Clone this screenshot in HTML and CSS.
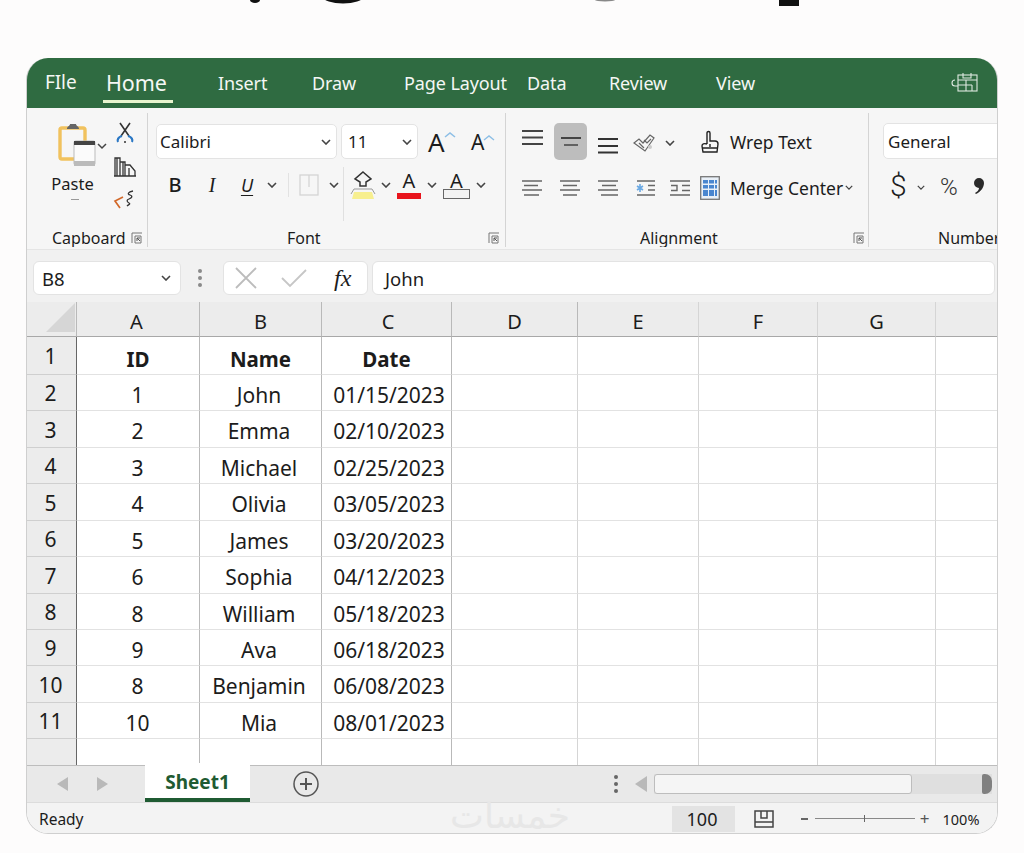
FILE: index.html
```html
<!DOCTYPE html>
<html lang="en">
<head>
<meta charset="utf-8">
<title>Sheet1 - Excel</title>
<link rel="stylesheet" href="styles.css">
</head>
<body>
<svg class="defs" width="0" height="0" aria-hidden="true">
  <symbol id="caret" viewBox="0 0 10 6"><path d="M1 1l4 4 4-4" fill="none" stroke="#444" stroke-width="1.6"/></symbol>
  <symbol id="launch" viewBox="0 0 12 12"><path d="M11 1H1v10M4 4h6v7H4z" fill="none" stroke="#777" stroke-width="1"/><path d="M6 9V6h3M6 6l3 3" fill="none" stroke="#555" stroke-width="1"/></symbol>
</svg>
<div class="page-top">
  <svg class="cut-heading" width="1024" height="7" viewBox="0 0 1024 7">
    <ellipse cx="255" cy="0" rx="5" ry="3" fill="#111"/>
    <ellipse cx="343" cy="-3" rx="20" ry="6.500" fill="#111"/>
    <ellipse cx="605" cy="0" rx="10" ry="1.500" fill="#888"/>
    <rect x="779" y="0" width="20" height="6" fill="#111"/>
  </svg>
</div>
<main class="window">
  <header class="titlebar">
    <nav class="tabs">
      <span class="tab t-file">FIle</span>
      <span class="tab t-home">Home</span>
      <span class="tab t-insert">Insert</span>
      <span class="tab t-draw">Draw</span>
      <span class="tab t-layout">Page Layout</span>
      <span class="tab t-data">Data</span>
      <span class="tab t-review">Review</span>
      <span class="tab t-view">View</span>
    </nav>
    <svg class="share" width="32" height="22" viewBox="0 0 32 22" fill="none" stroke="#dfe9e1" stroke-width="1.1">
      <path d="M7 8a3 3 0 1 0 0 6h3"/>
      <rect x="10" y="3" width="19" height="16"/>
      <path d="M15 1v5h8V1M10 8h19M10 13h14M18 8v11M24 13v6"/>
    </svg>
  </header>

  <section class="ribbon">
    <div class="group g-clip">
      <div class="group-body clip-body">
        <div class="paste">
          <svg width="60" height="50" viewBox="0 0 60 50">
            <rect x="12" y="8" width="25" height="31" rx="2" fill="none" stroke="#f1c25e" stroke-width="3.4"/>
            <path d="M19 9c0-3 3-3 3-5h6c0 2 3 2 3 5z" fill="#666"/>
            <rect x="26" y="21" width="21" height="24" rx="1.5" fill="#fbfbfb" stroke="#bbb"/>
            <rect x="26" y="21" width="21" height="4" fill="#444"/>
            <rect x="26" y="41" width="21" height="5" fill="#bbb"/>
            <path d="M50 24l4 4 4-4" fill="none" stroke="#444" stroke-width="1.5"/>
          </svg>
          <span class="paste-label">Paste</span>
          <span class="paste-dash"></span>
        </div>
        <div class="clip-tools">
          <svg width="22" height="24" viewBox="0 0 22 24" fill="none" stroke-width="1.6">
            <path d="M6 2l9 13M16 2L7 15" stroke="#333"/>
            <path d="M8 15c-4 1-5 4-4 6M14 15c4 1 5 4 4 6" stroke="#2b78c5" stroke-width="2.200"/>
            <path d="M10 21h2" stroke="#333"/>
          </svg>
          <svg width="24" height="22" viewBox="0 0 24 22" fill="none" stroke="#333" stroke-width="1.3">
            <path d="M2 20V2h5v18M7 20V6h5v14M12 20V9h5l5 6v5zM1 20h22M4 2v18M10 6v14M16 12v8"/>
          </svg>
          <svg width="24" height="22" viewBox="0 0 24 22" fill="none" stroke-width="1.7">
            <path d="M10 8L2 12l5 7" stroke="#d2692a"/>
            <path d="M20 2c-5 1-6 3-3 4s2 3-1 4 -2 3 0 4-1 2-2 3" stroke="#333" stroke-width="1.3"/>
          </svg>
        </div>
      </div>
      <div class="group-label"><span>Capboard</span><svg class="launch"><use href="#launch"/></svg></div>
    </div>

    <div class="group g-font">
      <div class="group-body">
        <div class="font-row1">
          <div class="select sel-font"><span>Calibri</span><svg class="caret"><use href="#caret"/></svg></div>
          <div class="select sel-size"><span>11</span><svg class="caret"><use href="#caret"/></svg></div>
          <span class="grow grow-up">A<svg width="12" height="7" viewBox="0 0 12 7"><path d="M1 6l5-4 5 4" fill="none" stroke="#8dbfe6" stroke-width="1.6"/></svg></span>
          <span class="grow grow-down">A<svg width="12" height="7" viewBox="0 0 12 7"><path d="M1 6l5-4 5 4" fill="none" stroke="#8dbfe6" stroke-width="1.4"/></svg></span>
        </div>
        <div class="font-row2">
          <b class="fmt fmt-b">B</b>
          <i class="fmt fmt-i">I</i>
          <span class="fmt fmt-u">U</span>
          <svg class="caret"><use href="#caret"/></svg>
          <span class="vsep"></span>
          <svg width="20" height="22" viewBox="0 0 20 22" fill="none" stroke="#d4d4d4" stroke-width="1.3"><rect x="1" y="1" width="18" height="20"/><path d="M10 1v12"/></svg>
          <svg class="caret"><use href="#caret"/></svg>
          <span class="vsep tall"></span>
          <svg width="30" height="30" viewBox="0 0 30 30" fill="none">
            <path d="M3 24l3-5h18l3 5" stroke="#999" stroke-width="1"/>
            <path d="M6 22h18l2 7H4z" fill="#f7ef8f"/>
            <path d="M15 2l8 7-5 3v4h-6v-4L7 9z" stroke="#333" stroke-width="1.5" fill="#f5f5f5"/>
          </svg>
          <svg class="caret"><use href="#caret"/></svg>
          <span class="letter letter-red">A</span>
          <svg class="caret"><use href="#caret"/></svg>
          <span class="letter letter-box">A</span>
          <svg class="caret"><use href="#caret"/></svg>
        </div>
      </div>
      <div class="group-label"><span>Font</span><svg class="launch"><use href="#launch"/></svg></div>
    </div>

    <div class="group g-align">
      <div class="group-body">
        <div class="align-row">
          <svg class="al-top" width="21" height="37" viewBox="0 0 21 37" stroke="#444" stroke-width="1.8"><path d="M0 8h21M0 14.500h21M0 21h21"/></svg>
          <span class="al-selected"><svg width="20" height="12" viewBox="0 0 20 12" stroke="#444" stroke-width="2"><path d="M0 2h20"/><path d="M3 9h14" stroke-width="1.5"/></svg></span>
          <svg class="al-bottom" width="20" height="37" viewBox="0 0 20 37" stroke="#333" stroke-width="1.8"><path d="M0 16h20M0 23h20M0 29.500h20"/></svg>
          <svg class="al-orient" width="22" height="20" viewBox="0 0 22 20" fill="none" stroke="#666" stroke-width="1.2"><path d="M1 10l5-4 4 4 7-8 4 3-9 13z"/><path d="M6 10l5 5M11 7l3 3 4-4"/><circle cx="17" cy="14" r="2" fill="#ccc" stroke="none"/></svg>
          <svg class="caret al-caret"><use href="#caret"/></svg>
          <svg class="al-wrap" width="20" height="24" viewBox="0 0 20 24" fill="none" stroke="#222" stroke-width="1.4"><path d="M7 14V3c0-2 3-2 3 0v8h5c2 0 3 1 3 3l-1 8H3l-1-6c0-2 2-3 5-2M2 18h15M10 14v3"/></svg>
          <span class="al-text">Wrep Text</span>
        </div>
        <div class="align-row row-two">
          <svg class="li" width="20" height="16" viewBox="0 0 20 16" stroke="#666" stroke-width="1.6"><path d="M0 1h20M2 5.500h14M0 10h20M2 15h15"/></svg>
          <svg class="li li2" width="20" height="16" viewBox="0 0 20 16" stroke="#666" stroke-width="1.6"><path d="M0 1h20M3 5.500h14M0 10h20M3 15h14"/></svg>
          <svg class="li li2" width="20" height="16" viewBox="0 0 20 16" stroke="#666" stroke-width="1.6"><path d="M0 1h20M4 5.500h14M0 10h20M3 15h17"/></svg>
          <svg class="li li3" width="20" height="16" viewBox="0 0 20 16" stroke="#666" stroke-width="1.6"><path d="M2 1h18M13 5.500h7M13 10h7M2 15h18"/><path d="M5 4v8M2 6l6 4M8 6l-6 4" stroke="#6aa9e4"/></svg>
          <svg class="li li4" width="20" height="16" viewBox="0 0 20 16" fill="none" stroke="#666" stroke-width="1.400"><path d="M0 1h20M1 5.500h6v5H1M12 5.500h8M12 10.500h8M0 15h20"/></svg>
          <svg class="li li5" width="20" height="24" viewBox="0 0 20 24"><rect x=".7" y=".7" width="18.600" height="22.600" fill="#e9f0f8" stroke="#777" stroke-width="1.300"/><path d="M3 4h5v3.500H3zM9 4h5v3.500H9zM15 4h2v3.500h-2zM3 9h5v3.500H3zM9 9h5v3.500H9zM15 9h2v3.500h-2zM3 14h5v6H3zM9 14h5v6H9zM15 14h2v6h-2z" fill="#4a86cf"/></svg>
          <span class="al-text">Merge Center</span>
          <svg class="caret small-caret"><use href="#caret"/></svg>
        </div>
      </div>
      <div class="group-label"><span>Alignment</span><svg class="launch"><use href="#launch"/></svg></div>
    </div>

    <div class="group g-number">
      <div class="group-body">
        <div class="select sel-num"><span>General</span></div>
        <div class="num-row">
          <span class="num-dollar">$</span>
          <svg class="caret"><use href="#caret"/></svg>
          <span class="num-pct">%</span>
          <svg class="num-comma" width="10" height="16" viewBox="0 0 10 16"><path d="M5 0a5 5 0 0 1 5 5c0 5-4 9-8 11l-1-1c2-1 4-3 4-5a5 5 0 0 1 0-10z" fill="#2a2a2a"/></svg>
        </div>
      </div>
      <div class="group-label"><span>Number</span></div>
    </div>
  </section>

  <section class="formula">
    <div class="fbox name-box"><span>B8</span><svg class="caret"><use href="#caret"/></svg></div>
    <div class="dots"><i></i><i></i><i></i></div>
    <div class="fbox fx-box">
      <svg width="24" height="24" viewBox="0 0 24 24" stroke="#bcbcbc" stroke-width="1.800"><path d="M2 2l20 20M22 2L2 22"/></svg>
      <svg class="fx-check" width="28" height="20" viewBox="0 0 28 20" fill="none" stroke="#c6c6c6" stroke-width="1.800"><path d="M2 10l8 8L26 2"/></svg>
      <span class="fx">fx</span>
    </div>
    <div class="fbox input-box">John</div>
  </section>

  <table class="sheet">
    <colgroup>
      <col class="c-head"><col class="c-a"><col class="c-b"><col class="c-c"><col class="c-d"><col class="c-e"><col class="c-f"><col class="c-g"><col class="c-h">
    </colgroup>
    <thead>
      <tr class="h35"><th class="corner"><svg width="30" height="30" viewBox="0 0 30 30"><path d="M29 0v29H0z" fill="#d6d6d6"/></svg></th><th class="col-a">A</th><th>B</th><th class="col-c">C</th><th>D</th><th>E</th><th>F</th><th>G</th><th></th></tr>
    </thead>
    <tbody>
      <tr class="h38 bold"><th>1</th><td>ID</td><td>Name</td><td>Date</td><td></td><td></td><td></td><td></td><td></td></tr>
      <tr class="h36"><th>2</th><td>1</td><td>John</td><td>01/15/2023</td><td></td><td></td><td></td><td></td><td></td></tr>
      <tr class="h37"><th>3</th><td>2</td><td>Emma</td><td>02/10/2023</td><td></td><td></td><td></td><td></td><td></td></tr>
      <tr class="h36"><th>4</th><td>3</td><td>Michael</td><td>02/25/2023</td><td></td><td></td><td></td><td></td><td></td></tr>
      <tr class="h37"><th>5</th><td>4</td><td>Olivia</td><td>03/05/2023</td><td></td><td></td><td></td><td></td><td></td></tr>
      <tr class="h36"><th>6</th><td>5</td><td>James</td><td>03/20/2023</td><td></td><td></td><td></td><td></td><td></td></tr>
      <tr class="h37"><th>7</th><td>6</td><td>Sophia</td><td>04/12/2023</td><td></td><td></td><td></td><td></td><td></td></tr>
      <tr class="h36"><th>8</th><td>8</td><td>William</td><td>05/18/2023</td><td></td><td></td><td></td><td></td><td></td></tr>
      <tr class="h36"><th>9</th><td>9</td><td>Ava</td><td>06/18/2023</td><td></td><td></td><td></td><td></td><td></td></tr>
      <tr class="h37"><th>10</th><td>8</td><td>Benjamin</td><td>06/08/2023</td><td></td><td></td><td></td><td></td><td></td></tr>
      <tr class="h36"><th>11</th><td>10</td><td>Mia</td><td>08/01/2023</td><td></td><td></td><td></td><td></td><td></td></tr>
      <tr class="h26 last"><th></th><td></td><td></td><td></td><td></td><td></td><td></td><td></td><td></td></tr>
    </tbody>
  </table>

  <section class="tabbar">
    <span class="tri tri-left tri-nav"></span>
    <span class="tri tri-right"></span>
    <span class="sheet-tab">Sheet1</span>
    <svg class="add-sheet" width="26" height="26" viewBox="0 0 26 26" fill="none" stroke="#555"><circle cx="13" cy="13" r="12" stroke-width="1.500"/><path d="M13 7v12M7 13h12" stroke-width="2"/></svg>
    <div class="dots tab-dots"><i></i><i></i><i></i></div>
    <span class="tri tri-left tri-scroll"></span>
    <div class="scroll"><span class="scroll-thumb"></span><span class="scroll-end"></span></div>
  </section>

  <footer class="status">
    <span class="ready">Ready</span>
    <span class="count">100</span>
    <svg class="view-icon" width="20" height="18" viewBox="0 0 20 18" fill="none" stroke="#444" stroke-width="1.500"><rect x="1" y="1" width="18" height="16"/><path d="M1 12h18M7 1v7h6V1"/></svg>
    <span class="zoom-minus"></span>
    <span class="slider"><span class="slider-tick"></span></span>
    <span class="zoom-plus">+</span>
    <span class="zoom-pct">100%</span>
    <span class="watermark" dir="rtl" lang="ar">خمسات</span>
  </footer>
</main>
</body>
</html>
```

FILE: styles.css
```css
* { box-sizing: border-box; }

html, body {
  margin: 0;
  height: 853px;
  overflow: hidden;
  background: #fdfcfc;
}

body {
  font-family: "Noto Sans", "Open Sans", sans-serif;
  color: #1c1c1c;
}

.defs { display: block; height: 0; }

.page-top { height: 58px; }
.page-top svg { display: block; }

.window {
  width: 972px;
  height: 776px;
  margin-left: 26px;
  border: 1px solid #cfcfcf;
  border-top: 0;
  border-radius: 22px;
  overflow: hidden;
  position: relative;
  background: #fff;
}

/* title bar */
.titlebar {
  height: 50px;
  margin: 0 -1px;
  background: #2f6b41;
  display: flex;
  align-items: center;
  justify-content: space-between;
  padding-right: 18px;
}

.tabs {
  display: grid;
  grid-template-columns: 80px 112px 94px 92px 123px 82px 107px auto;
  align-items: center;
  color: #f4f7f4;
  font-size: 18px;
  line-height: 50px;
}

.tab { white-space: nowrap; letter-spacing: -.1px; }
.t-file { padding-left: 19px; font-size: 19px; margin-right: -19px; margin-top: -2px; }
.t-home { font-size: 21.500px; position: relative; }
.t-home::after {
  content: "";
  position: absolute;
  left: -3px;
  bottom: 5px;
  width: 70px;
  height: 3px;
  background: #e8f4cf;
}

/* ribbon */
.ribbon {
  height: 142px;
  background: #f6f6f6;
  padding: 5px 0 2px;
  display: grid;
  grid-template-columns: 121px 358px 363px 1fr;
  border-bottom: 1px solid #e5e5e5;
}

.group {
  display: flex;
  flex-direction: column;
  border-right: 1px solid #d4d4d4;
  min-width: 0;
  overflow: hidden;
}

.group-body { height: 115px; flex: none; }

.group-label {
  height: 19px;
  flex: none;
  display: flex;
  align-items: center;
  font-size: 16px;
  padding-right: 5px;
  white-space: nowrap;
}

.launch { width: 12px; height: 12px; margin-left: auto; }

.g-clip .group-label { padding-left: 25px; padding-right: 4px; }
.g-font .group-label { padding-left: 139px; }
.g-align .group-label { padding-left: 134px; padding-right: 3px; }
.g-number .group-label { padding-left: 69px; }
.g-number { border-right: 0; }

.caret { width: 10px; height: 6px; flex: none; }

/* clipboard */
.clip-body { display: flex; padding: 7px 0 0 21px; }

.paste { width: 60px; display: flex; flex-direction: column; align-items: center; }
.paste svg { display: block; }
.paste-label { font-size: 16.500px; line-height: 22px; margin-top: 3px; margin-left: -11px; }
.paste-dash { width: 8px; height: 1px; background: #999; margin: 4px 0 0 -7px; }

.clip-tools {
  display: flex;
  flex-direction: column;
  align-items: center;
  width: 28px;
  margin-left: 3px;
  padding-top: 1px;
  gap: 11px;
}
.clip-tools svg { display: block; }

/* font */
.g-font .group-body { padding: 11px 0 0 8px; }

.font-row1 { display: flex; align-items: center; gap: 4px; }

.select {
  height: 35px;
  border: 1.500px solid #e3e3e3;
  border-radius: 5px;
  background: #fff;
  display: flex;
  align-items: center;
  justify-content: space-between;
  padding: 0 5px 0 3px;
  font-size: 17px;
}

.sel-font { width: 181px; }
.sel-size { width: 77px; padding-left: 6px; }

.grow { display: flex; align-items: flex-start; line-height: 1; }
.grow svg { margin-top: 2px; margin-left: -1px; }
.grow-up { font-size: 26px; margin-left: 6px; width: 39px; }
.grow-down { font-size: 21px; padding-top: 2px; }

.font-row2 {
  margin-top: 9px;
  height: 34px;
  display: grid;
  grid-template-columns: 26px 48px 22px 28px 4px 37px 14px 4px 36px 10px 36px 10px 39px 10px;
  grid-template-rows: 34px;
  align-items: center;
  justify-items: center;
  margin-left: 6px;
}

.fmt { font-size: 20px; line-height: 1; }
.fmt-b { font-weight: 500; }
.fmt-i { font-family: "Liberation Serif", serif; }
.fmt-u { font-size: 18px; text-decoration: underline; font-style: italic; text-underline-offset: 3px; }

.vsep { width: 1px; height: 24px; background: #e2e2e2; }
.vsep.tall { height: 54px; background: #e0e0e0; align-self: start; margin-top: -1px; }

.letter {
  font-size: 20px;
  line-height: 17px;
  height: 27px;
  text-align: center;
  display: block;
}
.letter-red { width: 24px; border-bottom: 6px solid #e8141c; }
.letter-box { width: 27px; height: 27px; }
.letter-box::after {
  content: "";
  display: block;
  height: 8px;
  border: 1px solid #666;
  background: #f3f3f3;
}

/* alignment */
.g-align .group-body { padding: 10px 0 0 16px; }

.align-row { display: flex; align-items: center; height: 37px; }
.align-row svg { flex: none; }
.row-two { margin-top: 9px; }

.al-selected {
  width: 33px;
  height: 37px;
  margin-left: 11px;
  background: #bdbdbd;
  border-radius: 5px;
  display: flex;
  align-items: center;
  justify-content: center;
}

.al-bottom { margin-left: 11px; }
.al-orient { margin-left: 15px; margin-top: 3px; }
.al-caret { margin-left: 10px; margin-top: 3px; }
.al-wrap { margin-left: 25px; }

.al-text { font-size: 17.500px; margin-left: 10px; white-space: nowrap; }
.li { display: block; }
.li2 { margin-left: 18px; }
.li3 { margin-left: 17px; }
.li4 { margin-left: 15px; }
.li5 { margin-left: 10px; }
.small-caret { width: 8px; height: 5px; margin-left: 2px; }

/* number */
.g-number .group-body { padding: 10px 0 0 14px; }
.sel-num { width: 125px; height: 36px; padding-left: 4px; }

.num-row {
  display: flex;
  align-items: center;
  height: 34px;
  margin-top: 11px;
  padding-left: 7px;
}
.num-dollar { font-size: 30px; font-weight: 300; line-height: 1; width: 20px; font-family: Roboto, sans-serif; margin-top: -2px; }
.num-row .caret { width: 8px; height: 5px; margin-left: 7px; }
.num-pct { font-size: 24px; font-weight: 300; font-family: Roboto, sans-serif; margin-left: 15px; color: #333; line-height: 1; }
.num-comma { margin-left: 16px; margin-top: -2px; flex: none; }

/* formula bar */
.formula {
  height: 52px;
  background: #f1f1f1;
  display: flex;
  align-items: center;
  padding: 4px 2px 0 6px;
}

.fbox {
  height: 34px;
  background: #fff;
  border: 1px solid #e3e3e3;
  border-radius: 6px;
  display: flex;
  align-items: center;
  font-size: 18.500px;
}

.name-box { width: 148px; padding: 0 9px 0 8px; justify-content: space-between; }

.dots {
  width: 38px;
  display: flex;
  flex-direction: column;
  align-items: center;
  gap: 3px;
}
.dots i { width: 4px; height: 4px; border-radius: 50%; background: #8a8a8a; }

.fx-box { width: 145px; margin: 0 4px; padding-left: 10px; }
.fx-check { margin-left: 22px; }
.fx {
  font-family: "Liberation Serif", serif;
  font-style: italic;
  font-size: 24px;
  margin-left: 26px;
}

.input-box { flex: 1; padding-left: 12px; }

/* grid */
.sheet {
  border-collapse: separate;
  border-spacing: 0;
  table-layout: fixed;
  width: 970px;
  font-size: 21px;
}

.c-head { width: 50px; }
.c-a { width: 123px; }
.c-b { width: 122px; }
.c-c { width: 130px; }
.c-d { width: 126px; }
.c-e { width: 121px; }
.c-f { width: 119px; }
.c-g { width: 118px; }
.c-h { width: 61px; }

.sheet th, .sheet td {
  padding: 0;
  line-height: 1;
  text-align: center;
  font-weight: 400;
  border-right: 1px solid #d5d5d5;
  border-bottom: 1px solid #e2e2e2;
  white-space: nowrap;
}

.sheet td:nth-child(-n+4), .sheet thead th:nth-child(-n+5) { border-right-color: #b9b9b9; }
.sheet tr > :last-child { border-right: 0; }

.sheet thead th {
  background: #ececec;
  font-size: 20px;
  border-bottom: 1px solid #a8a8a8;
  padding-top: 5px;
}

.sheet thead .col-a { padding-right: 3px; }
.sheet thead .col-c { padding-left: 3px; }

.sheet tbody th {
  background: #ececec;
  border-right: 1px solid #666;
  border-bottom: 1px solid #cfcfcf;
  padding: 2px 2px 0 0;
}

.sheet .corner { border-right: 1px solid #777; padding: 0; vertical-align: bottom; text-align: right; line-height: 0; }
.corner svg { display: block; margin: 0 0 3px auto; }

.sheet td { padding-top: 5px; }
.sheet td:nth-child(2) { padding-right: 1px; }
.sheet td:nth-child(3) { padding-right: 3px; }
.sheet td:nth-child(4) { padding-left: 5px; }
.sheet tbody tr > :last-child { border-right: 0; }

.h35 > * { height: 35px; }
.h38 > * { height: 38px; }
.h36 > * { height: 36px; }
.h37 > * { height: 37px; }
.h26 > * { height: 26px; }

.sheet .bold td { font-weight: 700; font-size: 20.500px; padding: 7px 0 0; }
.last > * { border-bottom: 0 !important; }

/* sheet tabs */
.tabbar {
  height: 37px;
  background: #e9e9e9;
  border-top: 1px solid #bdbdbd;
  display: flex;
  align-items: center;
}

.tri { width: 0; height: 0; border-style: solid; border-color: transparent; }
.tri-left { border-width: 7px 11px 7px 0; border-right-color: #b9b9b9; }
.tri-right { border-width: 7px 0 7px 11px; border-left-color: #b9b9b9; margin-left: 29px; }
.tri-nav { margin-left: 30px; }

.sheet-tab {
  width: 105px;
  height: 39px;
  margin: -3px 0 0 37px;
  background: #fff;
  border-bottom: 4px solid #1f5b32;
  color: #1f5b32;
  font-size: 19px;
  font-weight: 700;
  line-height: 39px;
  text-align: center;
}

.add-sheet { margin-left: 43px; flex: none; }

.tab-dots { width: 8px; margin-left: 293px; }
.tab-dots i { background: #666; }
.tri-scroll { margin-left: 15px; border-width: 8px 12px 8px 0; }

.scroll {
  margin-left: 7px;
  width: 338px;
  height: 20px;
  background: #dfdfdf;
  display: flex;
  align-items: center;
  justify-content: space-between;
}

.scroll-thumb {
  width: 258px;
  height: 20px;
  background: #f5f5f5;
  border: 1px solid #bdbdbd;
  border-radius: 3px;
}

.scroll-end {
  width: 10px;
  height: 20px;
  background: #808080;
  border-radius: 2px 7px 7px 2px;
}

/* status bar */
.status {
  height: 32px;
  background: #f3f3f3;
  border-top: 1px solid #dcdcdc;
  display: flex;
  align-items: center;
  position: relative;
}

.ready { font-size: 15.500px; margin-left: 12px; }
.count {
  margin-left: 588px;
  width: 63px;
  height: 26px;
  background: #e3e3e3;
  font-size: 18px;
  line-height: 26px;
  text-align: center;
  padding-right: 2px;
}
.view-icon { margin-left: 19px; flex: none; }
.zoom-minus { width: 7px; height: 2px; background: #666; margin-left: 27px; }
.slider {
  width: 100px;
  height: 1px;
  background: #888;
  margin-left: 7px;
  display: flex;
  justify-content: center;
  align-items: center;
}
.slider-tick { width: 1px; height: 7px; background: #666; }
.zoom-plus { font-size: 17px; margin-left: 1px; color: #555; width: 18px; text-align: center; line-height: 1; }
.zoom-pct { font-size: 14.500px; margin-left: 9px; }

.watermark {
  position: absolute;
  left: 423px;
  top: -9px;
  font-family: "DejaVu Sans", sans-serif;
  font-size: 36px;
  line-height: 44px;
  color: #e7e7e7;
  white-space: nowrap;
}
```
